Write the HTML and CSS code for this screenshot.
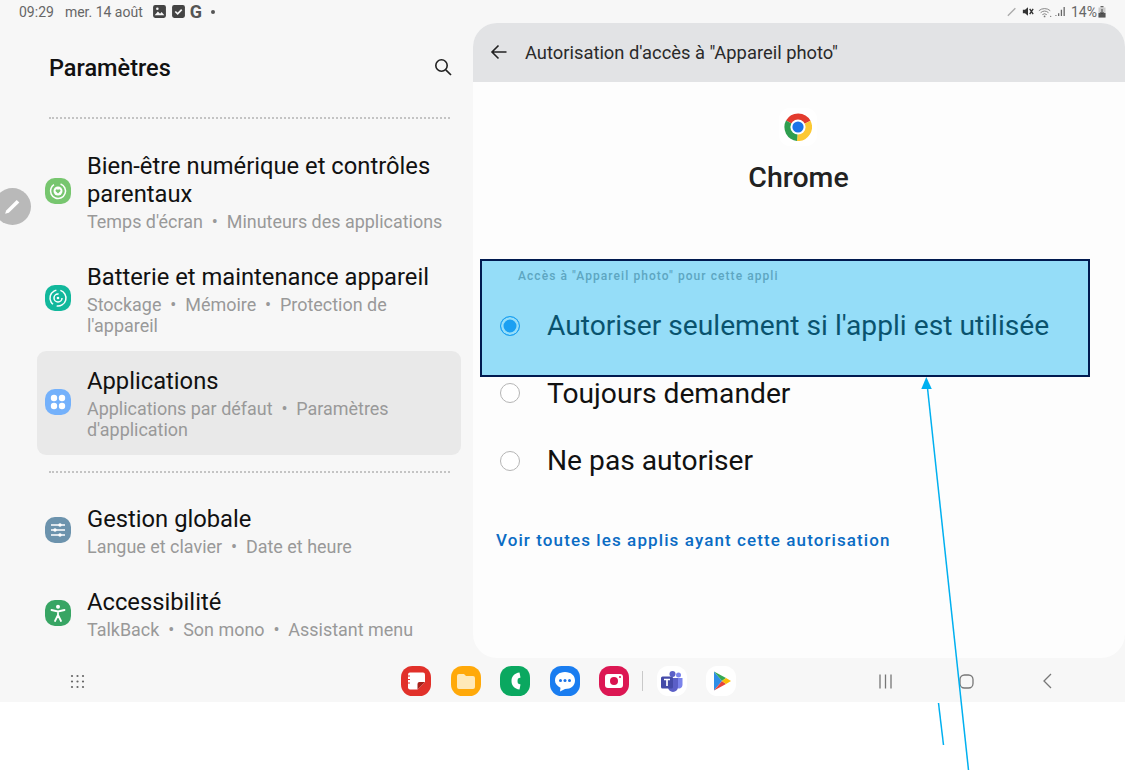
FILE: index.html
```html
<!DOCTYPE html>
<html lang="fr">
<head>
  <meta charset="UTF-8">
  <title>Paramètres</title>
  <link rel="stylesheet" href="styles.css">
</head>
<body>
  <div class="tablet">
    <div class="statusbar">
      <div class="status-left">
        <span class="clock">09:29</span>
        <span class="date">mer. 14 août</span>
        <svg class="noti noti-photo" viewBox="0 0 14 14"><rect x="1" y="1" width="12" height="12" rx="2" fill="#444"/><path d="M2.500 10.500l3-3.500 2 2 1.500-1.500 2.500 3z" fill="#f7f7f7"/><circle cx="5" cy="4.500" r="1.200" fill="#f7f7f7"/></svg>
        <svg class="noti noti-check" viewBox="0 0 14 14"><rect x="1" y="1" width="12" height="12" rx="2" fill="#444"/><path d="M4 7l2.200 2.200L10 5.200" fill="none" stroke="#f7f7f7" stroke-width="1.600"/></svg>
        <span class="g-letter">G</span>
        <span class="noti-dot"></span>
      </div>
      <div class="status-right">
        <svg class="stat-pen" viewBox="0 0 12 12"><path d="M1 11L10 2" stroke="#aaa" stroke-width="1.600"/></svg>
        <svg class="stat-mute" viewBox="0 0 14 12"><path d="M1 4h2.500L7 1v10L3.500 8H1z" fill="#333"/><path d="M9 3l4 6M13 3l-4 6" stroke="#333" stroke-width="1.600"/></svg>
        <svg class="stat-wifi" viewBox="0 0 16 12"><path d="M1 4.500a10 10 0 0 1 13 0M3 6.800a7 7 0 0 1 9 0M5 9a4 4 0 0 1 5 0" fill="none" stroke="#777" stroke-width="1"/><circle cx="7.500" cy="11" r="1" fill="#777"/><circle cx="14.500" cy="11" r=".7" fill="#777"/></svg>
        <svg class="stat-signal" viewBox="0 0 12 12"><path d="M1 10v1M4 8v3M7 4v7M10 1v10" stroke="#666" stroke-width="1.400"/></svg>
        <span class="battery-text">14%</span>
        <svg class="stat-batt" viewBox="0 0 8 12"><rect x="2.500" y="0" width="3" height="1.500" fill="#666"/><rect x=".5" y="1.500" width="7" height="10" fill="#ccc"/><rect x=".5" y="7" width="7" height="4.500" fill="#555"/><path d="M4 3v5M2.500 6L4 8l1.500-2" fill="none" stroke="#444"/></svg>
      </div>
    </div>

    <div class="panes">
      <div class="settings">
        <div class="settings-head">
          <span class="settings-title">Paramètres</span>
          <svg class="search" viewBox="0 0 20 20"><circle cx="8.500" cy="8.500" r="5.700" fill="none" stroke="#222" stroke-width="1.600"/><path d="M12.800 12.800L18 18" stroke="#222" stroke-width="1.700"/></svg>
        </div>
        <div class="dots"></div>

        <div class="item item-wellbeing">
          <span class="icon icon-green">
            <svg viewBox="0 0 26 26"><circle cx="13" cy="13" r="7.500" fill="none" stroke="#fff" stroke-width="1.500" stroke-dasharray="40 7" transform="rotate(-70 13 13)"/><circle cx="13" cy="13" r="4.500" fill="#fff"/><path d="M13 15.600l-2.300-2.300a1.300 1.300 0 0 1 2.300-1.300 1.300 1.300 0 0 1 2.300 1.300z" fill="#77c66f"/></svg>
          </span>
          <div class="item-text">
            <div class="item-title">Bien-être numérique et contrôles parentaux</div>
            <div class="item-sub">Temps d'écran &nbsp;•&nbsp; Minuteurs des applications</div>
          </div>
        </div>

        <div class="item item-battery">
          <span class="icon icon-teal">
            <svg viewBox="0 0 26 26"><circle cx="13" cy="13" r="8" fill="none" stroke="#fff" stroke-width="1.500" stroke-dasharray="18 4" transform="rotate(-30 13 13)"/><circle cx="13" cy="13" r="4" fill="none" stroke="#fff" stroke-width="1.500" stroke-dasharray="19 6"/><circle cx="13" cy="13" r="1.300" fill="#fff"/></svg>
          </span>
          <div class="item-text">
            <div class="item-title">Batterie et maintenance appareil</div>
            <div class="item-sub">Stockage &nbsp;•&nbsp; Mémoire &nbsp;•&nbsp; Protection de l'appareil</div>
          </div>
        </div>

        <div class="item item-active">
          <span class="icon icon-blue">
            <svg viewBox="0 0 26 26"><circle cx="9" cy="9" r="3.200" fill="#fff"/><circle cx="17" cy="9" r="3.200" fill="#fff"/><circle cx="9" cy="17" r="3.200" fill="#fff"/><circle cx="17" cy="17" r="3.200" fill="#fff"/></svg>
          </span>
          <div class="item-text">
            <div class="item-title">Applications</div>
            <div class="item-sub">Applications par défaut &nbsp;•&nbsp; Paramètres d'application</div>
          </div>
        </div>

        <div class="dots dots-second"></div>

        <div class="item item-general">
          <span class="icon icon-slate">
            <svg viewBox="0 0 26 26"><path d="M6 8h14M6 13h14M6 18h14" stroke="#fff" stroke-width="1.400"/><circle cx="15" cy="8" r="1.700" fill="#fff"/><circle cx="10" cy="13" r="1.700" fill="#fff"/><circle cx="15" cy="18" r="1.700" fill="#fff"/></svg>
          </span>
          <div class="item-text">
            <div class="item-title">Gestion globale</div>
            <div class="item-sub">Langue et clavier &nbsp;•&nbsp; Date et heure</div>
          </div>
        </div>

        <div class="item item-access">
          <span class="icon icon-darkgreen">
            <svg viewBox="0 0 26 26"><circle cx="13" cy="6.800" r="2" fill="#fff"/><path d="M6.500 10l6.500 1.500 6.500-1.500M13 11.500v4M13 15l-3 6M13 15l3 6" fill="none" stroke="#fff" stroke-width="1.800" stroke-linecap="round"/></svg>
          </span>
          <div class="item-text">
            <div class="item-title">Accessibilité</div>
            <div class="item-sub">TalkBack &nbsp;•&nbsp; Son mono &nbsp;•&nbsp; Assistant menu</div>
          </div>
        </div>
      </div>

      <div class="detail">
        <div class="detail-head">
          <svg class="back" viewBox="0 0 18 18"><path d="M16.500 9H2M8.500 2.500L2 9l6.500 6.500" fill="none" stroke="#222" stroke-width="1.600"/></svg>
          <span class="detail-title">Autorisation d'accès à "Appareil photo"</span>
        </div>
        <div class="app-info">
          <span class="chrome-tile">
            <svg viewBox="0 0 28 28">
              <path d="M14 14L2 7.500A14 14 0 0 1 26.500 7.800z" fill="#e33b2e"/>
              <path d="M14 14l12.500-6.200A14 14 0 0 1 13 28z" fill="#fcc934"/>
              <path d="M14 14l-1 14A14 14 0 0 1 2 7.500z" fill="#2f9e4f"/>
              <circle cx="14" cy="14" r="7.600" fill="#fff"/>
              <circle cx="14" cy="14" r="5.600" fill="#1a73e8"/>
            </svg>
          </span>
          <div class="app-name">Chrome</div>
        </div>
        <div class="section-label">Accès à "Appareil photo" pour cette appli</div>
        <div class="options">
          <div class="option"><span class="radio radio-on"></span>Autoriser seulement si l'appli est utilisée</div>
          <div class="option"><span class="radio"></span>Toujours demander</div>
          <div class="option"><span class="radio"></span>Ne pas autoriser</div>
        </div>
        <div class="see-all">Voir toutes les applis ayant cette autorisation</div>
      </div>
    </div>

    <div class="taskbar">
      <svg class="apps-grid" viewBox="0 0 15 15" fill="#666">
        <circle cx="2" cy="2" r="1.100"/><circle cx="7.500" cy="2" r="1.100"/><circle cx="13" cy="2" r="1.100"/>
        <circle cx="2" cy="7.500" r="1.100"/><circle cx="7.500" cy="7.500" r="1.100"/><circle cx="13" cy="7.500" r="1.100"/>
        <circle cx="2" cy="13" r="1.100"/><circle cx="7.500" cy="13" r="1.100"/><circle cx="13" cy="13" r="1.100"/>
      </svg>
      <div class="dock">
        <span class="dock-app app-notes"><svg viewBox="0 0 30 30"><path d="M9 6.500h13a2 2 0 0 1 2 2V16l-7.500 7.500H9a2 2 0 0 1-2-2v-13a2 2 0 0 1 2-2z" fill="#fff"/><path d="M16.500 23.500V18a2 2 0 0 1 2-2H24z" fill="#a8201a"/><path d="M6 10h3M6 13.500h3M6 17h3" stroke="#e1312a" stroke-width="1"/></svg></span>
        <span class="dock-app app-files"><svg viewBox="0 0 30 30"><path d="M6 10a2 2 0 0 1 2-2h5l2 2h7a2 2 0 0 1 2 2v9a2 2 0 0 1-2 2H8a2 2 0 0 1-2-2z" fill="#ffe9b8"/></svg></span>
        <span class="dock-app app-phone"><svg viewBox="0 0 30 30"><path d="M19.500 6.500c-5 .5-8 4-8 8.500s3 8 8 8.500l1-5-2.500-1c-.6-1.600-.6-3.400 0-5l2.500-1z" fill="#fff"/></svg></span>
        <span class="dock-app app-msg"><svg viewBox="0 0 30 30"><path d="M15 6c6 0 10 3.500 10 8.500S21 23 15 23l-5 2.500 .5-3.800C7 20 5 17.500 5 14.500 5 9.500 9 6 15 6z" fill="#fff"/><circle cx="10.500" cy="14.500" r="1.500" fill="#1a73e8"/><circle cx="15" cy="14.500" r="1.500" fill="#1a73e8"/><circle cx="19.500" cy="14.500" r="1.500" fill="#1a73e8"/></svg></span>
        <span class="dock-app app-camera"><svg viewBox="0 0 30 30"><rect x="6" y="8" width="18" height="14" rx="3" fill="#fff"/><circle cx="15" cy="15" r="4" fill="#d9134f"/><circle cx="21" cy="11" r="1" fill="#d9134f"/></svg></span>
        <span class="dock-sep"></span>
        <span class="dock-app app-teams"><svg viewBox="0 0 30 30"><circle cx="21.500" cy="9" r="2.500" fill="#7b83eb"/><circle cx="15.500" cy="8" r="3" fill="#5b5fc7"/><path d="M18 12h7.500v7a3.500 3.500 0 0 1-6 2.500z" fill="#7b83eb"/><path d="M10 12h11v9a5 5 0 0 1-10 0z" fill="#5b5fc7"/><rect x="4" y="10.500" width="12" height="12" rx="1.500" fill="#444aa8"/><path d="M7 13.500h6M10 13.500v6.500" stroke="#fff" stroke-width="1.700"/></svg></span>
        <span class="dock-app app-play"><svg viewBox="0 0 30 30"><path d="M8 5.500L16 15 8 24.500z" fill="#2f8fe8"/><path d="M8 5.500l12 6.500-4 3z" fill="#35a853"/><path d="M8 24.500l12-6.500-4-3z" fill="#e8433a"/><path d="M20 12l5 3-5 3-4-3z" fill="#fbbc04"/></svg></span>
      </div>
      <div class="nav-keys">
        <svg class="nav-recent" viewBox="0 0 15 15"><path d="M2 .5v14M7.500 .5v14M13 .5v14" stroke="#777" stroke-width="1.300"/></svg>
        <svg class="nav-home" viewBox="0 0 15 15"><rect x="1" y="1" width="13" height="13" rx="4.500" fill="none" stroke="#777" stroke-width="1.300"/></svg>
        <svg class="nav-back" viewBox="0 0 10 16"><path d="M9 1L2 8l7 7" fill="none" stroke="#777" stroke-width="1.300"/></svg>
      </div>
    </div>
  </div>

  <!-- floating edit handle -->
  <div class="edit-handle">
    <svg viewBox="0 0 20 20"><path d="M3 17l1-3.200L14 3.800l2.500 2.500L6.500 16z" fill="#fff"/></svg>
  </div>

  <!-- callout drawn on top of the screenshot -->
  <div class="callout-box"></div>
  <svg class="callout-arrow" viewBox="0 0 1125 770">
    <path d="M968.500 770L927.500 388" stroke="#00b0f0" stroke-width="1.500" fill="none"/>
    <path d="M926.300 377l-5 12h10.500z" fill="#00b0f0"/>
    <path d="M938.500 703L943.500 745" stroke="#00b0f0" stroke-width="1.500" fill="none"/>
  </svg>
</body>
</html>
```

FILE: styles.css
```css
* {
  box-sizing: border-box;
}

body {
  margin: 0;
  width: 1125px;
  height: 770px;
  position: relative;
  overflow: hidden;
  background: #fff;
  font-family: Roboto, sans-serif;
  color: #111;
}

.tablet {
  height: 702px;
  background: #f7f7f7;
  display: flex;
  flex-direction: column;
}

/* status bar */
.statusbar {
  height: 23px;
  padding: 0 19px;
  display: flex;
  justify-content: space-between;
  align-items: center;
  font-size: 14px;
  color: #666;
}

.status-left,
.status-right {
  display: flex;
  align-items: center;
}

.date {
  margin-left: 11px;
}

.noti {
  width: 15px;
  height: 15px;
}

.noti-photo {
  margin-left: 9px;
}

.noti-check {
  margin-left: 4px;
}

.g-letter {
  margin-left: 4px;
  font-size: 18px;
  line-height: 18px;
  font-weight: 700;
  color: #555;
}

.noti-dot {
  width: 4px;
  height: 4px;
  margin-left: 9px;
  border-radius: 50%;
  background: #555;
}

.stat-pen {
  width: 10px;
  height: 11px;
}

.stat-mute {
  width: 12px;
  height: 11px;
  margin-left: 5px;
}

.stat-wifi {
  width: 14px;
  height: 12px;
  margin-left: 4px;
}

.stat-signal {
  width: 11px;
  height: 11px;
  margin-left: 3px;
}

.battery-text {
  margin-left: 5px;
  width: 25px;
}

.stat-batt {
  width: 8px;
  height: 12px;
  margin-left: 2px;
}

.panes {
  height: 635px;
  display: flex;
}

/* left column */
.settings {
  width: 473px;
  flex: none;
  padding-left: 37px;
}

.settings-head {
  height: 46px;
  margin-top: 22px;
  padding: 0 10px 0 12px;
  display: flex;
  justify-content: space-between;
  align-items: center;
}

.settings-title {
  font-size: 23.500px;
  font-weight: 500;
}

.search {
  width: 20px;
  height: 20px;
  margin-right: 10px;
  margin-bottom: 2px;
}

.dots {
  width: 401px;
  margin: 26px 0 0 12px;
  border-top: 2px dotted #c4c4c4;
}

.item {
  width: 424px;
  display: flex;
  align-items: center;
  padding: 0 8px;
  border-radius: 9px;
}

.item-wellbeing {
  margin-top: 33px;
}

.item-battery {
  margin-top: 31px;
}

.item-active {
  margin-top: 15px;
  height: 104px;
  background: #e9e9e9;
}

.dots-second {
  margin-top: 16px;
}

.item-general {
  margin-top: 32px;
}

.item-access {
  margin-top: 31px;
}

.icon {
  width: 26px;
  height: 26px;
  margin-bottom: 3px;
  flex: none;
  border-radius: 38%;
  display: block;
}

.icon svg {
  display: block;
  width: 26px;
  height: 26px;
}

.icon-green {
  background: #77c66f;
}

.icon-teal {
  background: #12b89c;
}

.icon-blue {
  background: #74b1fb;
}

.icon-slate {
  background: #6c93ad;
}

.icon-darkgreen {
  background: #38a564;
}

.item-text {
  margin-left: 16px;
  min-width: 0;
}

.item-title {
  font-size: 23.750px;
  line-height: 28px;
  color: #111;
}

.item-sub {
  margin-top: 3px;
  font-size: 17.950px;
  line-height: 21px;
  color: #999;
}

/* right panel */
.detail {
  flex: 1;
  background: #fdfdfd;
  border-radius: 24px;
  overflow: hidden;
}

.detail-head {
  height: 59px;
  padding: 0 0 1px 17px;
  background: #e2e3e5;
  display: flex;
  align-items: center;
}

.back {
  width: 18px;
  height: 18px;
}

.detail-title {
  margin-left: 17px;
  font-size: 18.350px;
  color: #2a2a2a;
}

.app-info {
  margin-top: 26px;
  padding-right: 1px;
  display: flex;
  flex-direction: column;
  align-items: center;
}

.chrome-tile {
  width: 38px;
  height: 38px;
  margin-right: 1px;
  padding: 5px;
  border-radius: 11px;
  background: #fff;
}

.chrome-tile svg {
  display: block;
  width: 28px;
  height: 28px;
}

.app-name {
  margin-top: 15px;
  font-size: 28.500px;
  line-height: 33px;
  font-weight: 500;
  color: #222;
}

.section-label {
  margin: 75px 0 0 45px;
  font-size: 12px;
  line-height: 15px;
  font-weight: 500;
  letter-spacing: 1.070px;
  color: #a0a0a0;
}

.options {
  margin-top: 8px;
  padding-left: 27px;
}

.option {
  height: 67.500px;
  display: flex;
  align-items: center;
  font-size: 28.200px;
  color: #111;
}

.radio {
  width: 20px;
  height: 20px;
  margin-right: 27px;
  flex: none;
  border-radius: 50%;
  border: 1.500px solid #b5b5b5;
  background: #fff;
}

.radio-on {
  border-color: #2f96f3;
  background: #2f96f3;
  box-shadow: inset 0 0 0 2.500px #fff;
}

.see-all {
  margin: 35px 0 0 23px;
  font-size: 17px;
  line-height: 20px;
  font-weight: 500;
  letter-spacing: 1.100px;
  color: #0b6cc4;
}

/* bottom task bar */
.taskbar {
  height: 44px;
  padding: 2px 0 0 70px;
  display: flex;
  align-items: center;
}

.apps-grid {
  width: 15px;
  height: 15px;
}

.dock {
  margin-left: 316px;
  display: flex;
  align-items: center;
}

.dock-app {
  width: 30px;
  height: 30px;
  margin-right: 19.500px;
  border-radius: 38%;
  display: block;
}

.dock-app svg {
  display: block;
  width: 30px;
  height: 30px;
}

.app-notes {
  background: #e1312a;
}

.app-files {
  background: #ffa90a;
}

.app-phone {
  background: #0aa860;
}

.app-msg {
  background: #1a7df0;
}

.app-camera {
  background: #dc1753;
}

.app-teams,
.app-play {
  background: #fff;
}

.dock-sep {
  width: 1px;
  height: 20px;
  margin: 0 13.500px 0 -6.500px;
  background: #c9c9c9;
}

.nav-keys {
  margin-left: 122px;
  display: flex;
  align-items: center;
}

.nav-recent {
  width: 15px;
  height: 15px;
}

.nav-home {
  width: 15px;
  height: 15px;
  margin-left: 66px;
}

.nav-back {
  width: 10px;
  height: 16px;
  margin-left: 68px;
}

/* overlays */
.edit-handle {
  position: absolute;
  left: -6px;
  top: 188px;
  width: 37px;
  height: 37px;
  padding: 8px;
  border-radius: 50%;
  background: #b9b9b9;
}

.edit-handle svg {
  display: block;
  width: 21px;
  height: 21px;
}

.callout-box {
  position: absolute;
  left: 480px;
  top: 259px;
  width: 610px;
  height: 118px;
  border: 2px solid #001a50;
  background: rgba(0, 176, 240, 0.41);
}

.callout-arrow {
  position: absolute;
  left: 0;
  top: 0;
  width: 1125px;
  height: 770px;
  pointer-events: none;
}
```
